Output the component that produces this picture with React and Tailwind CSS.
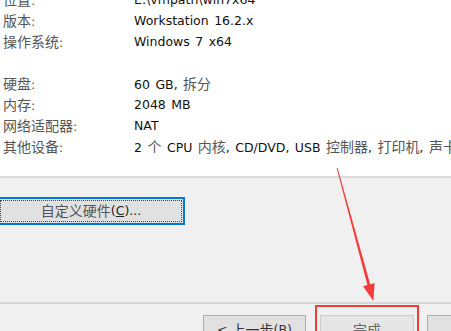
import React from 'react';

const ROWS = [
  { label: '位置', value: [['E:\\vmpath\\win7x64', 0]] },
  { label: '版本', value: [['Workstation 16.2.x', 0]] },
  { label: '操作系统', value: [['Windows 7 x64', 0]] },
  null,
  { label: '硬盘', value: [['60 GB, ', 0], ['拆分', 1]] },
  { label: '内存', value: [['2048 MB', 0]] },
  { label: '网络适配器', value: [['NAT', 0]] },
  {
    label: '其他设备',
    value: [
      ['2 ', 0], ['个', 1], [' CPU ', 0], ['内核', 1], [', CD/DVD, USB ', 0],
      ['控制器', 1], [', ', 0], ['打印机', 1], [', ', 0], ['声卡', 1],
    ],
  },
];

// CJK glyphs render a touch larger and lighter than the latin text
const Cjk = ({ children, className = '' }) => (
  <span className={`text-[14px] ${className}`}>{children}</span>
);

function Row({ row }) {
  if (!row) return <div className="h-[21px]" />;
  return (
    <div className="flex h-[21px] items-center whitespace-nowrap">
      <div className="w-[134px] shrink-0 pl-[3px] text-[#555]">
        <Cjk>{row.label}</Cjk>:
      </div>
      <div className="text-[#111] [word-spacing:1.5px]">
        {row.value.map(([t, cjk], i) =>
          cjk ? <Cjk key={i} className="text-[#555]">{t}</Cjk> : <span key={i}>{t}</span>
        )}
      </div>
    </div>
  );
}

export default function App() {
  return (
    <div
      className="relative w-[451px] h-[331px] overflow-hidden flex flex-col bg-white text-[12.5px]"
      style={{ fontFamily: '"DejaVu Sans", "Noto Sans CJK SC", sans-serif' }}
    >
      {/* summary list */}
      <div className="h-[176px] shrink-0 overflow-hidden">
        <div className="-mt-[10px]">
          {ROWS.map((r, i) => (
            <Row key={i} row={r} />
          ))}
        </div>
      </div>

      {/* dialog body */}
      <div className="flex-1 flex flex-col bg-[#f0f0f0] border-t-2 border-[#dadada]">
        <div className="pt-[19px]">
          <div className="-ml-[3px] w-[188px] h-[28px] border-2 border-[#0078d7] bg-[#e1e1e1] p-px">
            <div className="h-full border border-dotted border-[#444] flex items-center justify-center text-[#555]">
              <Cjk>自定义硬件</Cjk>
              <span className="text-[#222]">(<span className="underline">C</span>)...</span>
            </div>
          </div>
        </div>

        <div className="flex-1" />

        <div className="border-t-2 border-[#d6d6d6] h-[29px] flex items-start pt-[11px]">
          <div className="ml-[203px] w-[103px] h-[30px] shrink-0 border border-[#adadad] bg-[#e1e1e1] flex items-center justify-center text-[#333]">
            &lt; <Cjk className="ml-1">上一步</Cjk>(<span className="underline">B</span>)
          </div>
          <div className="ml-[14px] w-[94px] h-[30px] shrink-0 border border-[#cccccc] bg-[#e6e6e6] flex items-center justify-center text-[#666]">
            <Cjk>完成</Cjk>
          </div>
          <div className="ml-[13px] w-[94px] h-[30px] shrink-0 border border-[#adadad] bg-[#e1e1e1] flex items-center justify-center text-[#333]">
            <Cjk>取消</Cjk>
          </div>
        </div>
      </div>

      {/* annotation: red box + arrow */}
      <div className="absolute left-[315px] top-[305px] w-[104px] h-[40px] border-2 border-[#f23c3c]" />
      <svg className="absolute left-0 top-0 pointer-events-none" width="451" height="331">
        <polygon
          points="336.6,168 337.6,168 370.2,284.2 374.6,283 373.4,301 363,286.2 367.4,285"
          fill="#f23c3c"
        />
      </svg>
    </div>
  );
}
